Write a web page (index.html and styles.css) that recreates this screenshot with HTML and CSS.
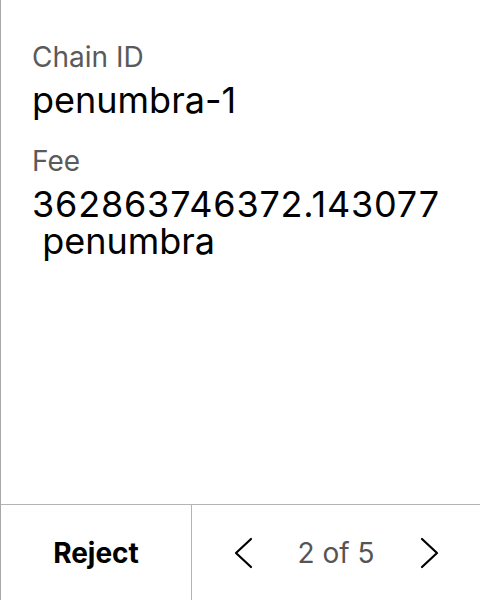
FILE: index.html
```html
<!DOCTYPE html>
<html>
<head>
<meta charset="utf-8">
<link rel="stylesheet" href="styles.css">
</head>
<body>
<div class="screen">
  <main class="content">
    <div class="field">
      <div class="label">Chain ID</div>
      <div class="value">penumbra-1</div>
    </div>
    <div class="field">
      <div class="label">Fee</div>
      <div class="value fee"><span class="amount">362863746372.143077</span><span class="denom"> penumbra</span></div>
    </div>
  </main>
  <footer class="footer">
    <button class="reject">Reject</button>
    <div class="pager">
      <button class="nav" aria-label="Previous">
        <svg width="20" height="32" viewBox="0 0 20 32"><path d="M18 2 L3 16 L18 30" fill="none" stroke="#000" stroke-width="2.2" stroke-linecap="round" stroke-linejoin="round"/></svg>
      </button>
      <span class="count">2 of 5</span>
      <button class="nav" aria-label="Next">
        <svg width="20" height="32" viewBox="0 0 20 32"><path d="M2 2 L17 16 L2 30" fill="none" stroke="#000" stroke-width="2.2" stroke-linecap="round" stroke-linejoin="round"/></svg>
      </button>
    </div>
  </footer>
</div>
</body>
</html>
```
FILE: styles.css
```css
* { box-sizing: border-box; }
html, body { margin: 0; padding: 0; background: #fff; }
body {
  font-family: Inter, "Noto Sans", sans-serif;
  color: #000;
}
.screen {
  width: 480px;
  height: 600px;
  display: flex;
  flex-direction: column;
  border-left: 1px solid #a8a8a8;
}
.content {
  flex: 1;
  padding: 40px 30px 0 31px;
  display: flex;
  flex-direction: column;
  gap: 25px;
}
.label {
  font-size: 28px;
  line-height: 34px;
  color: #5a5a5a;
}
.value {
  margin-top: 8px;
  font-size: 36px;
  line-height: 37px;
  color: #000;
}
.amount {
  display: block;
  letter-spacing: 0.8px;
}
.denom {
  display: block;
  white-space: pre;
}
.footer {
  height: 96px;
  border-top: 1px solid #b4b4b4;
  display: flex;
}
.reject {
  width: 191px;
  border: 0;
  border-right: 1px solid #b4b4b4;
  background: none;
  font-family: inherit;
  font-size: 28px;
  font-weight: 700;
  color: #000;
  padding: 0;
}
.pager {
  flex: 1;
  display: flex;
  align-items: center;
  justify-content: center;
  gap: 45px;
}
.nav {
  border: 0;
  background: none;
  padding: 0;
  display: flex;
}
.count {
  font-size: 28px;
  color: #555;
}
```
